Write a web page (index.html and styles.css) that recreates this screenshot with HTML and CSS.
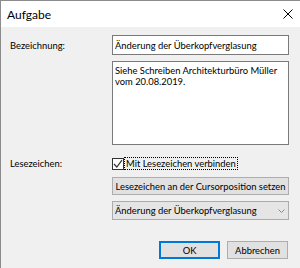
FILE: index.html
```html
<!DOCTYPE html>
<html lang="de">
<head>
    <meta charset="UTF-8">
    <title>Aufgabe</title>
    <link rel="stylesheet" href="styles.css">
</head>
<body>
    <div class="fenster">
        <div class="titelleiste">
            <span class="titel">Aufgabe</span>
            <svg class="schliessen" width="10" height="10" viewBox="0 0 10 10">
                <path d="M0.5 0.5 L9.5 9.5 M9.5 0.5 L0.5 9.5" stroke="#000" stroke-width="1" fill="none"/>
            </svg>
        </div>

        <div class="inhalt">
            <label class="beschriftung">Bezeichnung:</label>
            <input class="feld" type="text" value="Änderung der Überkopfverglasung">

            <span></span>
            <textarea class="feld mehrzeilig">Siehe Schreiben Architekturbüro Müller
vom 20.08.2019.</textarea>

            <label class="beschriftung zeile-lesezeichen">Lesezeichen:</label>
            <div class="zeile-lesezeichen ankreuz">
                <span class="kaestchen">
                    <svg width="10" height="10" viewBox="0 0 10 10">
                        <path d="M1 5 L3.8 8 L9 1.2" stroke="#333" stroke-width="1.2" fill="none"/>
                    </svg>
                </span>
                <span class="fokus">Mit Lesezeichen verbinden</span>
            </div>

            <span></span>
            <button class="knopf breit">Lesezeichen an der Cursorposition setzen</button>

            <span></span>
            <div class="auswahl">
                <span>Änderung der Überkopfverglasung</span>
                <svg width="7" height="4" viewBox="0 0 7 4">
                    <path d="M0.5 0.5 L3.5 3.5 L6.5 0.5" stroke="#8a8a8a" stroke-width="1" fill="none"/>
                </svg>
            </div>
        </div>

        <div class="aktionen">
            <button class="knopf standard">OK</button>
            <button class="knopf">Abbrechen</button>
        </div>
    </div>
</body>
</html>
```

FILE: styles.css
```css
* {
    box-sizing: border-box;
    margin: 0;
    padding: 0;
}

body {
    font-family: 'Lato', sans-serif;
    font-size: 9.4px;
    color: #000;
    background: #f0f0f0;
    width: 300px;
    height: 268px;
    overflow: hidden;
}

.fenster {
    height: 268px;
    border-top: 1px solid #8c8c8c;
    border-left: 1px solid #8c8c8c;
    background: #f0f0f0;
}

.titelleiste {
    height: 26px;
    background: #fff;
    display: flex;
    align-items: center;
    justify-content: space-between;
    padding: 0 7px 0 6px;
}

.titel {
    font-size: 12px;
}

.inhalt {
    display: grid;
    grid-template-columns: 102px 177px;
    padding: 8px 0 0 9px;
    row-gap: 6px;
}

.beschriftung {
    display: flex;
    align-items: center;
    align-self: start;
    height: 20px;
}

.feld {
    font-family: inherit;
    font-size: 9.4px;
    height: 20px;
    padding: 0 2px;
    border: 1px solid #7a7a7a;
    background: #fff;
    color: #000;
    outline: none;
}

.mehrzeilig {
    height: 84px;
    padding: 3px 2px;
    line-height: 11px;
    resize: none;
    overflow: hidden;
}

.zeile-lesezeichen {
    margin-top: 6px;
    height: 13px;
}

.ankreuz {
    display: flex;
    align-items: center;
}

.kaestchen {
    width: 12px;
    height: 12px;
    border: 1px solid #333;
    background: #fff;
    display: flex;
    align-items: center;
    justify-content: center;
}

.fokus {
    border: 1px dotted #000;
    padding: 0 1px;
    line-height: 11px;
}

.knopf {
    font-family: inherit;
    font-size: 9.4px;
    height: 18px;
    background: #e1e1e1;
    border: 1px solid #adadad;
    color: #000;
}

.breit {
    width: 177px;
    margin-top: 1px;
}

.auswahl {
    height: 19px;
    background: #e5e5e5;
    border: 1px solid #acacac;
    display: flex;
    align-items: center;
    justify-content: space-between;
    padding: 0 3px 0 2px;
}

.aktionen {
    display: flex;
    gap: 7px;
    padding: 21px 0 0 158px;
}

.aktionen .knopf {
    width: 61px;
    height: 18px;
}

.standard {
    border: 1px solid #0078d7;
    box-shadow: inset 0 0 0 1px #0078d7;
}
```
